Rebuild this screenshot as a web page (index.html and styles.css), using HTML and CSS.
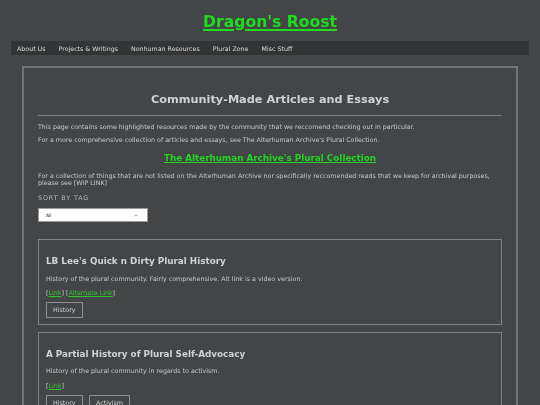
FILE: index.html
```html
<!DOCTYPE html>
<html lang="en">
<head>
<meta charset="utf-8">
<title>Dragon's Roost</title>
<link rel="stylesheet" href="styles.css">
</head>
<body>
<div class="page">
<header class="site-header">
  <h1 class="site-title"><a href="#">Dragon's Roost</a></h1>
</header>
<nav class="site-nav">
  <a href="#">About Us</a>
  <a href="#">Projects &amp; Writings</a>
  <a href="#">Nonhuman Resources</a>
  <a href="#">Plural Zone</a>
  <a href="#">Misc Stuff</a>
</nav>
<main class="content">
  <h2 class="page-title">Community-Made Articles and Essays</h2>
  <hr class="rule">
  <p class="text intro">This page contains some highlighted resources made by the community that we reccomend checking out in particular.</p>
  <p class="text intro-2">For a more comprehensive collection of articles and essays, see The Alterhuman Archive's Plural Collection.</p>
  <h3 class="feature-link"><a href="#">The Alterhuman Archive's Plural Collection</a></h3>
  <p class="text archive">For a collection of things that are not listed on the Alterhuman Archive nor specifically reccomended reads that we keep for archival purposes, please see [WIP LINK]</p>
  <div class="sort-label">SORT BY TAG</div>
  <div class="select">
    <span class="select-value">All</span>
    <svg class="select-arrow" width="4" height="3" viewBox="0 0 4 3"><path d="M0.5 0.7 L2 2.2 L3.5 0.7" fill="none" stroke="#666" stroke-width="0.7"/></svg>
  </div>
  <section class="card">
    <h3 class="card-title">LB Lee's Quick n Dirty Plural History</h3>
    <p class="text desc">History of the plural community. Fairly comprehensive. Alt link is a video version.</p>
    <p class="text links">[<a href="#">Link</a>] [<a href="#">Alternate Link</a>]</p>
    <div class="tags"><span class="tag">History</span></div>
  </section>
  <section class="card">
    <h3 class="card-title">A Partial History of Plural Self-Advocacy</h3>
    <p class="text desc">History of the plural community in regards to activism.</p>
    <p class="text links">[<a href="#">Link</a>]</p>
    <div class="tags"><span class="tag">History</span><span class="tag">Activism</span></div>
  </section>
</main>
</div>
</body>
</html>
```

FILE: styles.css
```css
html, body {
  margin: 0;
  padding: 0;
}
body {
  background: #434547;
  color: #c6c8c9;
  font-family: "DejaVu Sans", Verdana, sans-serif;
  font-size: 6.33px;
  height: 405px;
  overflow: hidden;
}
.page {
  padding: 0 11px;
  will-change: transform;
  -webkit-font-smoothing: antialiased;
}
.site-header {
  text-align: center;
  box-sizing: border-box;
  padding-top: 12px;
  height: 41px;
}
.site-title {
  margin: 0;
  font-size: 15.6px;
  line-height: 20px;
  font-weight: bold;
}
.site-title a {
  color: #1fdc1f;
  text-decoration: underline;
  text-decoration-thickness: 1.5px;
  text-underline-offset: 1.8px;
}
.site-nav {
  background: #333435;
  height: 14px;
  display: flex;
  align-items: center;
  gap: 13px;
  padding-left: 6px;
}
.site-nav a {
  color: #dcdddd;
  text-decoration: none;
  font-size: 6.3px;
}
.content {
  margin: 11px 11px 0;
  border: 2px solid #737577;
  padding: 0 14px;
}
.page-title {
  margin: 25.3px 0 0;
  text-align: center;
  font-size: 11.3px;
  line-height: 14px;
  color: #cdd3d6;
}
.rule {
  border: 0;
  height: 1.5px;
  background: #7c7e80;
  margin: 7.7px 0 0;
}
.text {
  margin: 0;
  line-height: 7.6px;
}
.intro {
  margin-top: 6.4px;
}
.intro-2 {
  margin-top: 5.8px;
}
.feature-link {
  margin: 8.8px 0 0;
  text-align: center;
  font-size: 8.8px;
  line-height: 11px;
}
.feature-link a {
  color: #22d622;
  text-decoration-thickness: 1px;
}
.archive {
  margin-top: 8.2px;
}
.sort-label {
  margin-top: 6.5px;
  letter-spacing: 0.9px;
  color: #b8babb;
  line-height: 7.6px;
}
.select {
  margin-top: 7.1px;
  box-sizing: border-box;
  width: 110px;
  height: 14.2px;
  background: #ffffff;
  border: 1px solid #9a9a9a;
  display: flex;
  align-items: center;
  justify-content: space-between;
  padding: 0 9px 0 7px;
}
.select-value {
  color: #222;
  font-size: 4.5px;
}
.select-arrow {
  display: block;
}
.card {
  border: 1px solid #808284;
  margin-top: 17px;
  padding: 0 7px 6.5px;
}
.card + .card {
  margin-top: 6.7px;
}
.card-title {
  margin: 15.5px 0 0;
  font-size: 8.8px;
  line-height: 11px;
  color: #d0d4d6;
}
.desc {
  margin-top: 7.8px;
}
.links {
  margin-top: 7px;
}
.links a {
  color: #2fc92f;
}
.tags {
  display: flex;
  gap: 6.5px;
  margin-top: 5.5px;
}
.tag {
  box-sizing: border-box;
  border: 1px solid #8c8e90;
  padding: 0 6px;
  height: 15.6px;
  line-height: 13.6px;
  color: #d0d0d0;
}
```
